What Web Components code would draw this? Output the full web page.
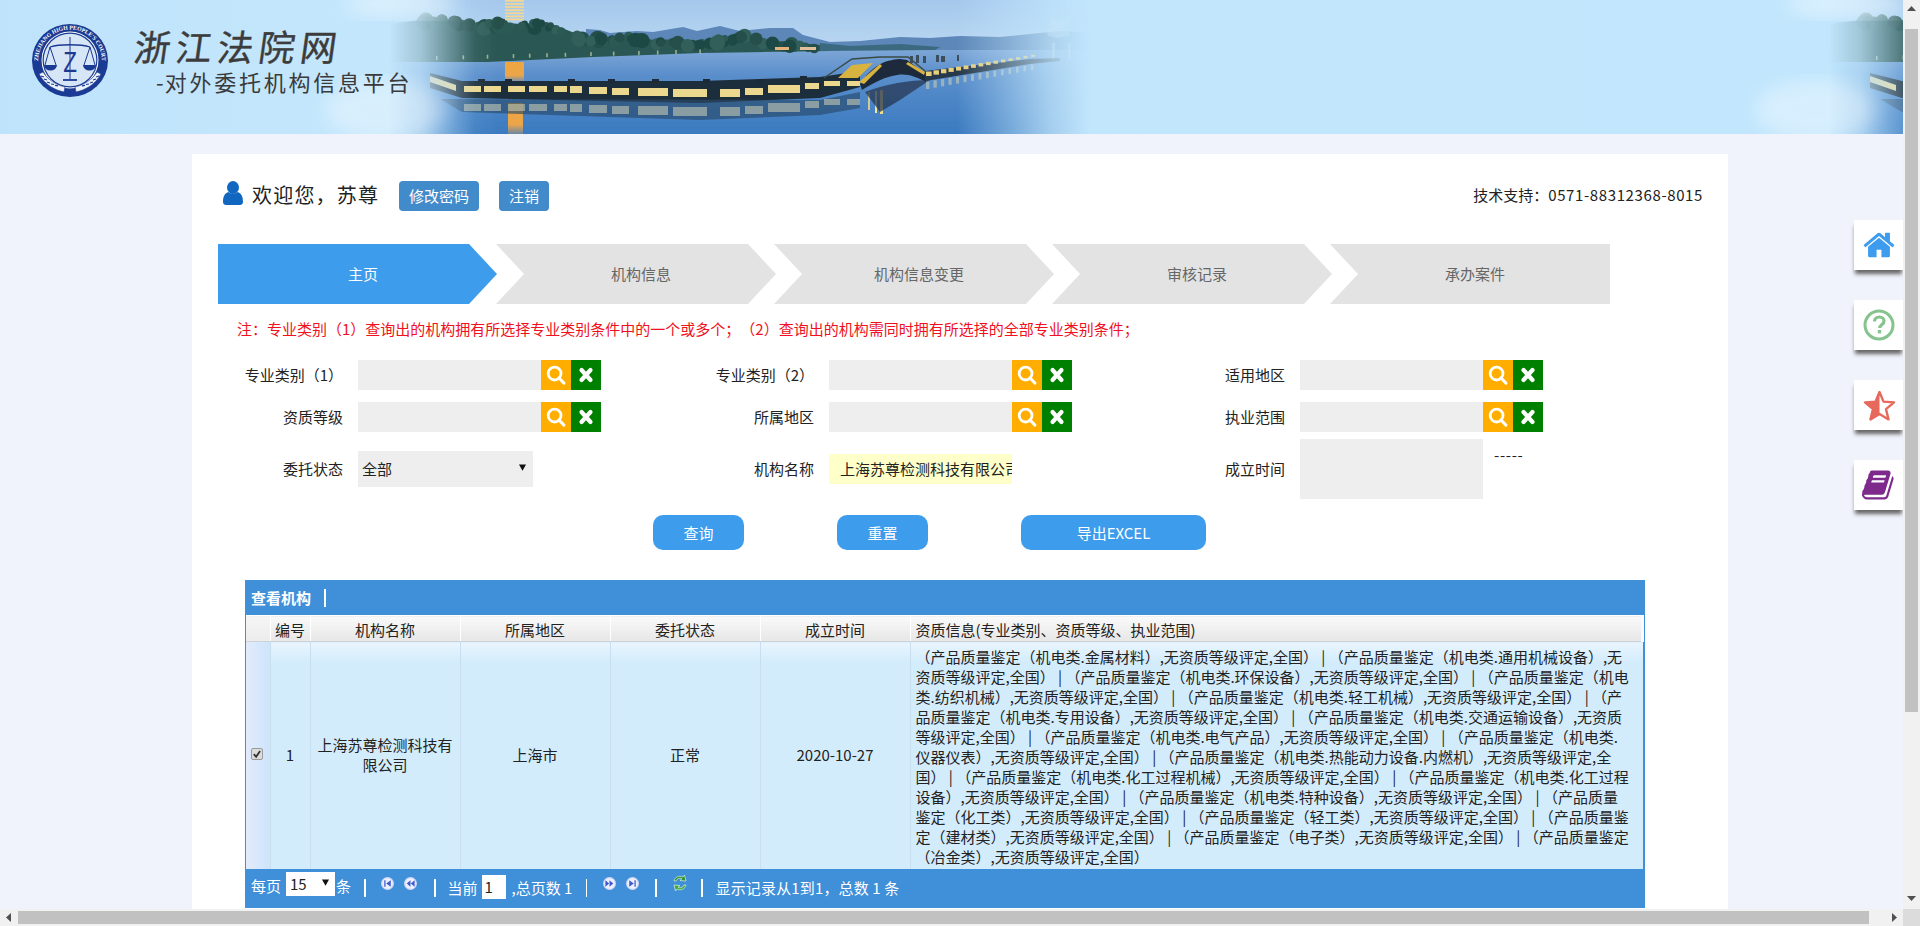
<!DOCTYPE html>
<html lang="zh-CN">
<head>
<meta charset="utf-8">
<title>浙江法院网</title>
<style>
html,body{margin:0;padding:0;height:926px;overflow:hidden;background:#f0f3fb;}
body{font:15px/20px "Noto Sans CJK SC","Liberation Sans",sans-serif;color:#222;text-spacing-trim:space-all;}
</style>
</head>
<body>
<app-shell>
  <court-header></court-header>
  <main-card>
    <welcome-bar></welcome-bar>
    <step-nav>
      <step-item first active>主页</step-item>
      <step-item>机构信息</step-item>
      <step-item>机构信息变更</step-item>
      <step-item>审核记录</step-item>
      <step-item last>承办案件</step-item>
    </step-nav>
    <search-form></search-form>
    <data-grid></data-grid>
  </main-card>
</app-shell>
<side-dock></side-dock>
<fake-scrollbars></fake-scrollbars>

<script>
function def(name, css, html){
  customElements.define(name, class extends HTMLElement{
    constructor(){
      super();
      const r=this.attachShadow({mode:'open'});
      r.innerHTML='<style>'+css+'</style>'+(typeof html==='function'?html():html);
    }
  });
}

/* ---------- header scene ---------- */
function sceneSvg(){
  const lights=[[464,86,481,92],[484,86,501,92],[508,86,525,92],[529,86,547,92],[554,86,567,92],[570,86,582,93],[589,87,607,94],[612,88,629,95],[638,88,668,96],[673,89,707,97],[720,89,740,97],[745,88,763,95],[768,85,800,93],[805,83,819,89],[824,81,840,86],[847,81,860,86]];
  let l='',rf='';
  lights.forEach(a=>{
    l+=`<rect x="${a[0]}" y="${a[1]}" width="${a[2]-a[0]}" height="${a[3]-a[1]}" fill="#ecd78f"/>`;
    rf+=`<rect x="${a[0]}" y="${a[1]+18}" width="${a[2]-a[0]}" height="${a[3]-a[1]+1}" fill="#cfd2b8" opacity=".55"/>`;
  });
  let posts='';
  [478,505,568,608,652,703,757,800,838].forEach((x,i)=>{posts+=`<rect x="${x}" y="${79-(x>760?3:0)}" width="7" height="4" fill="#1b2a38"/>`;});
  let causeway='';
  for(let i=0;i<15;i++){
    const x=926+i*7.5, y=71.5-i*1.2, w=5.6-i*.12, h=4.5-i*.16;
    causeway+=`<rect x="${x}" y="${y}" width="${w}" height="${h}" fill="#e7cf7c"/>`;
    causeway+=`<rect x="${x}" y="${y+10}" width="${w*.6}" height="${h+3}" fill="#e9e2b4" opacity=".45"/>`;
  }
  let floors='';
  for(let i=0;i<7;i++){
    floors+=`<rect x="505" y="${i*3.1}" width="19" height="1.7" fill="#f3d690"/>`;
  }
  let trees='',seed=7;
  const rnd=()=>{seed=(seed*9301+49297)%233280;return seed/233280;};
  const tops=[[420,20],[453,19],[480,25],[497,22],[520,24],[547,22],[567,30],[590,39],[607,37],[633,35],[653,40],[680,39],[700,42],[740,35],[767,40],[820,45]];
  for(let i=0;i<tops.length-1;i++){
    const a=tops[i],b=tops[i+1];
    for(let k=0;k<(b[0]-a[0])/4;k++){
      const t=rnd(),x=a[0]+(b[0]-a[0])*t,y=a[1]+(b[1]-a[1])*t+rnd()*6,r=3+rnd()*5;
      const c=['#1f4a44','#2b5a52','#25504c','#315f5a'][Math.floor(rnd()*4)];
      trees+=`<circle cx="${x.toFixed(1)}" cy="${y.toFixed(1)}" r="${r.toFixed(1)}" fill="${c}"/>`;
    }
  }
  let shore='';
  for(let x=436;x<700;x+=13+rnd()*14){
    const y=56-(x-436)*.025;
    shore+=`<rect x="${x.toFixed(1)}" y="${y.toFixed(1)}" width="1.6" height="4" fill="#b7c7a0" opacity=".8"/>`;
  }
  return `<svg viewBox="0 0 1903 134" width="1903" height="134" xmlns="http://www.w3.org/2000/svg" aria-hidden="true">
  <defs>
    <linearGradient id="fade" x1="0" x2="1440" y1="0" y2="0" gradientUnits="userSpaceOnUse">
      <stop offset=".27" stop-color="#fff" stop-opacity="0"/><stop offset=".292" stop-color="#fff" stop-opacity=".22"/><stop offset=".31" stop-color="#fff" stop-opacity=".55"/><stop offset=".33" stop-color="#fff" stop-opacity=".93"/><stop offset=".345" stop-color="#fff"/>
      <stop offset=".665" stop-color="#fff"/><stop offset=".695" stop-color="#fff" stop-opacity=".65"/><stop offset=".73" stop-color="#fff" stop-opacity=".22"/><stop offset=".757" stop-color="#fff" stop-opacity="0"/>
    </linearGradient>
    <mask id="m" maskUnits="userSpaceOnUse" x="0" y="0" width="1440" height="134"><rect width="1440" height="134" fill="url(#fade)"/></mask>
    <linearGradient id="sky" x1="0" x2="0" y1="0" y2="1"><stop offset="0" stop-color="#a4c8ec"/><stop offset="1" stop-color="#bdd9f2"/></linearGradient>
    <linearGradient id="water" x1="0" x2="0" y1="0" y2="1"><stop offset="0" stop-color="#7ca6d6"/><stop offset=".3" stop-color="#5a8ecb"/><stop offset="1" stop-color="#3a7ac0"/></linearGradient>
    <linearGradient id="glow" x1="0" x2="0" y1="0" y2="1"><stop offset="0" stop-color="#f0a63f"/><stop offset=".7" stop-color="#eba548"/><stop offset="1" stop-color="#d8a060" stop-opacity=".3"/></linearGradient>
    <filter id="soft" x="-2%" y="-10%" width="104%" height="120%"><feGaussianBlur stdDeviation=".7"/></filter>
    <filter id="cloud"><feGaussianBlur stdDeviation="9"/></filter>
    <g id="scene">
      <g mask="url(#m)">
      <g filter="url(#soft)">
        <rect x="370" y="0" width="740" height="56" fill="url(#sky)"/>
        <rect x="370" y="50" width="740" height="84" fill="url(#water)"/>
        <polygon fill="#5b87b8" points="586,29 600,30 610,33 623,32 637,31 653,32 683,27 697,31 720,26 740,31 770,28 793,28 803,35 830,42 860,41 900,37 930,38 960,36 1000,37 1060,31 1100,33 1100,50 586,50"/>
        <polygon fill="#2a5653" points="390,24 420,20 453,19 480,25 497,22 520,24 547,22 567,30 590,39 607,37 633,35 653,40 680,39 700,42 740,35 767,40 820,45 830,47 830,51 700,53 593,57 487,62 390,62"/>
        ${trees}
        <polygon fill="#3a6a80" points="820,43 850,46 900,44 940,47 935,50 820,51"/>
        ${shore}
        <rect x="775" y="47" width="14" height="3" fill="#e6b27a"/><rect x="800" y="47" width="16" height="3" fill="#dfc09a"/>
        <rect x="505" y="62" width="19" height="19" fill="url(#glow)"/>
        <rect x="508" y="103" width="15" height="31" fill="url(#glow)"/>
        ${floors}
        <g opacity=".5" fill="#d7dfe6"><path d="M1050 17l10 5 11-6-4 8 5 4-6 2 5 5-12 3-10-2-3-5 6-3-4-4 3-2z"/><rect x="1052" y="43" width="3" height="16"/><rect x="1068" y="43" width="3" height="16"/></g>
        <polygon fill="#1e2d3a" points="430,73 462,81 700,81 820,77 860,71 860,87 820,98 700,103 462,98 430,88"/>
        ${posts}
        ${l}
        <polygon fill="#e8d79a" points="430,76 456,85 456,91 430,82"/>
        <polygon fill="#2a4a6c" opacity=".65" points="440,99 820,100 860,92 860,108 820,115 700,120 462,112"/>
        ${rf}
        <rect x="880" y="90" width="3" height="24" fill="#f0dc88"/><rect x="868" y="92" width="2" height="18" fill="#f0dc88" opacity=".8"/><rect x="875" y="91" width="2" height="22" fill="#f3e49e"/>
        <path fill="#1e2b3a" d="M860 84 C872 66 884 60 900 59 L907 60 L926 74 L926 82 C915 76 905 72 892 76 C880 79 872 84 862 90Z"/>
        <polygon fill="#d9b33f" points="838,78 852,65 873,63 858,78"/>
        <polygon fill="#d9b33f" points="859,82 880,64 882,66 864,84"/>
        <polygon fill="#d9b33f" points="908,62 925,72 924,75 906,64"/>
        <path fill="none" stroke="#3b4a44" stroke-width="1.5" d="M824 78 L852 59 L880 57 L908 57 L925 71"/>
        <path fill="#253752" opacity=".75" d="M865 92 C885 84 910 80 930 80 L900 100 L880 112Z"/>
        <polygon fill="#26374a" points="925,71 1030,59 1060,58 1060,61 1030,64 925,81"/>
        ${causeway}
        <g fill="#3d4d5c"><rect x="910" y="56" width="3" height="7"/><rect x="916" y="55" width="3" height="8"/><rect x="923" y="56" width="3" height="7"/><rect x="936" y="55" width="3" height="7"/><rect x="941" y="56" width="4" height="6"/><rect x="957" y="55" width="2" height="6"/></g>
      </g>
      </g>
    </g>
  </defs>
  <use href="#scene"/><use href="#scene" x="1440"/>
  <ellipse cx="400" cy="4" rx="55" ry="14" fill="#fff" opacity=".38" filter="url(#cloud)"/>
  <ellipse cx="1845" cy="4" rx="60" ry="14" fill="#fff" opacity=".4" filter="url(#cloud)"/>
  <ellipse cx="385" cy="110" rx="60" ry="30" fill="#fff" opacity=".35" filter="url(#cloud)"/>
  <ellipse cx="1815" cy="110" rx="60" ry="30" fill="#fff" opacity=".35" filter="url(#cloud)"/>
  </svg>`;
}

function emblem(){
  return `<svg viewBox="0 0 78 75" width="78" height="75" xmlns="http://www.w3.org/2000/svg" role="img" aria-label="court emblem">
    <defs><path id="arc" d="M10 52A32 32 0 1 1 68 52"/></defs>
    <ellipse cx="39" cy="37.500" rx="38" ry="36.500" fill="#1b3a93"/>
    <circle cx="39" cy="37" r="28.500" fill="#fff"/>
    <circle cx="39" cy="37" r="27.500" fill="#1b3a93"/>
    <circle cx="39" cy="37" r="26.300" fill="#d6e6f6"/>
    <text font-family="Liberation Serif,serif" font-size="5.800" font-weight="700" fill="#fff" text-anchor="middle"><textPath href="#arc" startOffset="50%">ZHEJIANG HIGH PEOPLE'S COURT</textPath></text>
    <g fill="none" stroke="#1b3a93" stroke-width="1">
      <path d="M19 24 C28 21 50 21 59 24" stroke-width="1.300"/><path d="M39 14 V56"/><path d="M32 57 H46" stroke-width="1.800"/>
      <path d="M19 24 L14 42 M19 24 L25 42 M59 24 L53 42 M59 24 L64 42"/>
    </g>
    <path d="M13 42 h13 a6.500 5.500 0 0 1 -13 0z M52 42 h13 a6.500 5.500 0 0 1 -13 0z" fill="#1b3a93"/>
    <text transform="translate(39 49) scale(.75 1)" text-anchor="middle" font-family="Liberation Sans,sans-serif" font-size="30" fill="#1b3a93">Z</text>
    <g fill="#eef3fb" stroke="#1b3a93" stroke-width=".6">
      <path d="M8 51 C14 62 24 67 33 69 L34 64 C25 62 17 57 12 49Z"/>
      <path d="M70 51 C64 62 54 67 45 69 L44 64 C53 62 61 57 66 49Z"/>
    </g>
    <path d="M10 53l3 1m0 2l3 1m0 2l3 1m1 1l3 .5m1 .8l3 .5M68 53l-3 1m0 2l-3 1m0 2l-3 1m-1 1l-3 .5m-1 .8l-3 .5" stroke="#1b3a93" stroke-width="1.200" fill="none"/>
  </svg>`;
}

def('court-header',`
  :host{display:grid;height:134px;width:1903px;overflow:hidden;background:linear-gradient(90deg,#bee3fb 0,#c3e6fc 300px,#c1e6fd 100%);}
  .bg,.fg{grid-area:1/1;}
  .bg{line-height:0;}
  .fg{display:flex;align-items:flex-start;padding:23px 0 0 31px;position:relative;}
  .titles{margin-left:26px;padding-top:1px;}
  .t1{font-size:36px;line-height:43px;letter-spacing:5.5px;color:#3c3c3c;font-weight:400;transform:skewX(-8deg);white-space:nowrap;-webkit-text-stroke:.4px #3c3c3c;}
  .t2{font-size:22px;line-height:28px;letter-spacing:2.75px;color:#3a3a3a;margin:0 0 0 21px;white-space:nowrap;}
  .t2 b{font-weight:400;letter-spacing:1px;}
`,()=>`<div class="bg">${sceneSvg()}</div>
  <div class="fg">${emblem()}<div class="titles"><div class="t1">浙江法院网</div><div class="t2"><b>-</b>对外委托机构信息平台</div></div></div>`);

def('app-shell',`:host{display:block;width:1903px;height:909px;overflow:hidden;background:#f0f3fb;}`,`<slot></slot>`);
def('main-card',`:host{display:block;width:1510px;margin:20px 0 0 192px;padding:26px 0 0 26px;background:#fff;height:755px;box-sizing:content-box;}`,`<slot></slot>`);

/* ---------- welcome ---------- */
def('small-btn',`:host{display:inline-flex;align-items:center;justify-content:center;height:30px;padding:0 10px;background:#428bca;color:#fff;border-radius:4px;font-size:15px;box-sizing:border-box;}`,`<slot></slot>`);
def('welcome-bar',`
  :host{display:flex;align-items:center;height:32px;margin-bottom:32px;padding-left:5px;width:1485px;box-sizing:border-box;}
  svg{display:block;margin-top:-6px;}
  .hi{font-size:20px;letter-spacing:1.2px;margin-left:9px;width:127px;white-space:nowrap;color:#222;margin-top:-2px;}
  small-btn{margin-left:20px;}
  .tel{margin-left:auto;font-size:15px;color:#222;white-space:nowrap;margin-top:-3px;}
  .tel b{font-weight:400;letter-spacing:.62px;}
`,`<svg width="20" height="24" viewBox="0 0 20 24"><ellipse cx="10" cy="6.500" rx="6" ry="6.500" fill="#1166c0"/><path d="M0 21c0-6 2-9 5.500-10 2.500 2.200 6.500 2.200 9 0C18 12 20 15 20 21c0 2-1.500 3-3 3H3c-1.500 0-3-1-3-3z" fill="#1166c0"/></svg>
  <span class="hi">欢迎您，苏尊</span><small-btn>修改密码</small-btn><small-btn>注销</small-btn>
  <span class="tel">技术支持：<b>0571-88312368-8015</b></span>`);

/* ---------- steps ---------- */
def('step-nav',`:host{display:flex;height:60px;}`,`<slot></slot>`);
def('step-item',`
  :host{display:flex;align-items:center;justify-content:center;box-sizing:border-box;width:280px;height:60px;padding-left:10px;margin-left:-2px;background:#e3e3e3;color:#666;font-size:15px;
    clip-path:polygon(0 0,252px 0,280px 30px,252px 60px,0 60px,28px 30px);flex:none;}
  :host([first]){margin-left:0;clip-path:polygon(0 0,251px 0,279px 30px,251px 60px,0 60px);}
  :host([last]){clip-path:polygon(0 0,100% 0,100% 100%,0 100%,28px 30px);}
  :host([active]){background:#3d9ceb;color:#fff;}
`,`<slot></slot>`);

/* ---------- form ---------- */
const ICON_SEARCH=`<svg width="20" height="20" viewBox="0 0 20 20"><circle cx="8.600" cy="8.600" r="6.400" fill="none" stroke="#fff" stroke-width="2.800"/><path d="M13 13l4.800 5" stroke="#fff" stroke-width="3.200" stroke-linecap="round"/></svg>`;
const ICON_X=`<svg width="16" height="18" viewBox="0 0 16 18"><path d="M3.500 4l9 10M12.500 4l-9 10" stroke="#fff" stroke-width="4.200" stroke-linecap="round"/></svg>`;
def('pick-input',`
  :host{display:flex;height:30px;}
  .box{width:183px;background:#eee;}
  .b{width:30px;display:flex;align-items:center;justify-content:center;}
  .s{background:#ffae00;}
  .x{background:#008000;}
`,`<div class="box"></div><div class="b s">${ICON_SEARCH}</div><div class="b x">${ICON_X}</div>`);
def('status-select',`
  :host{display:flex;align-items:center;justify-content:space-between;width:175px;height:36px;background:#eee;padding:0 7px 0 4px;box-sizing:border-box;font-size:15px;color:#222;}
  svg{display:block;margin-top:-3px;}
`,`<span>全部</span><svg width="7" height="7" viewBox="0 0 7 7"><path d="M0 .5h7L3.500 6.800z" fill="#111"/></svg>`);
def('name-input',`
  :host{display:block;width:183px;height:30px;background:#ffffc9;padding-left:11px;box-sizing:border-box;overflow:hidden;}
  div{width:180px;line-height:30px;white-space:nowrap;color:#222;}
`,`<div><slot></slot></div>`);
def('date-range',`
  :host{display:flex;align-items:flex-start;height:60px;}
  .box{width:183px;height:60px;background:#eee;}
  span{margin:6px 0 0 11px;line-height:20px;letter-spacing:.7px;}
`,`<div class="box"></div><span>-----</span>`);
def('action-btn',`
  :host{display:flex;align-items:center;justify-content:center;height:35px;width:91px;background:#3d9ceb;color:#fff;border-radius:10px;font-size:15px;flex:none;}
`,`<slot></slot>`);

def('search-form',`
  :host{display:block;}
  .note{color:#f01020;margin:15px 0 21px 19px;height:20px;white-space:pre;font-size:15px;line-height:19px;}
  .row{display:flex;}
  .r2{margin-top:12px;}
  .r3{margin-top:7px;height:60px;}
  .btns{display:flex;gap:93px;padding-left:435px;margin:16px 0 30px;}
  .w{width:185px;}
  .f{display:flex;align-items:center;width:471px;}
  .l{width:125px;text-align:right;margin-right:15px;white-space:nowrap;flex:none;color:#222;}
`,()=>{
  const f=(l,c)=>`<div class="f"><div class="l">${l}</div>${c}</div>`;
  return `<div class="note">注：专业类别（1）查询出的机构拥有所选择专业类别条件中的一个或多个；（2）查询出的机构需同时拥有所选择的全部专业类别条件；</div>
  <div class="row">${f('专业类别（1）','<pick-input></pick-input>')}${f('专业类别（2）','<pick-input></pick-input>')}${f('适用地区','<pick-input></pick-input>')}</div>
  <div class="row r2">${f('资质等级','<pick-input></pick-input>')}${f('所属地区','<pick-input></pick-input>')}${f('执业范围','<pick-input></pick-input>')}</div>
  <div class="row r3">${f('委托状态','<status-select></status-select>')}${f('机构名称','<name-input>上海苏尊检测科技有限公司</name-input>')}${f('成立时间','<date-range></date-range>')}</div>
  <div class="btns"><action-btn>查询</action-btn><action-btn>重置</action-btn><action-btn class="w">导出EXCEL</action-btn></div>`;
});

/* ---------- grid ---------- */
const navIcon=(d)=>`<svg class="nav" width="13" height="13" viewBox="0 0 12 12"><circle cx="6" cy="6" r="6" fill="#cfd8f8"/><circle cx="6" cy="6" r="4.800" fill="#eef0fc"/><path d="${d}" fill="#3f5ccf"/></svg>`;
const Q=[
'（产品质量鉴定（机电类.金属材料）,无资质等级评定,全国） | （产品质量鉴定（机电类.通用机械设备）,无',
'资质等级评定,全国） | （产品质量鉴定（机电类.环保设备）,无资质等级评定,全国） | （产品质量鉴定（机电',
'类.纺织机械）,无资质等级评定,全国） | （产品质量鉴定（机电类.轻工机械）,无资质等级评定,全国） | （产',
'品质量鉴定（机电类.专用设备）,无资质等级评定,全国） | （产品质量鉴定（机电类.交通运输设备）,无资质',
'等级评定,全国） | （产品质量鉴定（机电类.电气产品）,无资质等级评定,全国） | （产品质量鉴定（机电类.',
'仪器仪表）,无资质等级评定,全国） | （产品质量鉴定（机电类.热能动力设备.内燃机）,无资质等级评定,全',
'国） | （产品质量鉴定（机电类.化工过程机械）,无资质等级评定,全国） | （产品质量鉴定（机电类.化工过程',
'设备）,无资质等级评定,全国） | （产品质量鉴定（机电类.特种设备）,无资质等级评定,全国） | （产品质量',
'鉴定（化工类）,无资质等级评定,全国） | （产品质量鉴定（轻工类）,无资质等级评定,全国） | （产品质量鉴',
'定（建材类）,无资质等级评定,全国） | （产品质量鉴定（电子类）,无资质等级评定,全国） | （产品质量鉴定',
'（冶金类）,无资质等级评定,全国）'];
def('data-grid',`
  :host{display:block;width:1398px;margin-left:27px;padding:0 1px;background:#3f8fd9;}
  .title{height:35px;display:flex;align-items:center;color:#fff;font-weight:700;font-size:15px;padding-left:5px;}
  .title i{display:block;width:1.5px;height:18px;background:#fff;margin-left:13px;}
  table{border-collapse:collapse;table-layout:fixed;width:1398px;border-top:1px solid #fff;}
  th{height:26px;padding:3px 0 0;font-weight:400;font-size:15px;line-height:20px;color:#222;background:linear-gradient(#fafafa,#e6e6e6);border-right:1px solid #fff;border-bottom:1px solid #cfd3d6;box-sizing:border-box;}
  th.c0{background:linear-gradient(#f5f5f5,#ececec);}
  th.q{text-align:left;padding-left:5px;border-right:3px solid #f7fbff;}
  td{height:227px;padding:0 6px;text-align:center;vertical-align:middle;background:linear-gradient(#e9f5fe 0,#d3ecfc 20px);border-right:1px solid #c9dff0;box-sizing:border-box;font-size:15px;line-height:20px;color:#222;}
  td.c0{padding:0;background:linear-gradient(90deg,#e2ebfc,#cde4fa);}
  td.c0 svg{display:block;margin:-3px 0 0 5px;}
  td.q{text-align:left;vertical-align:top;padding:5px 0 0 5px;white-space:nowrap;border-right:0;}
  .foot{height:39px;display:flex;align-items:center;color:#fff;font-size:15px;padding-left:5px;box-sizing:border-box;white-space:nowrap;}
  .foot i{display:block;width:1.5px;height:18px;background:#fff;flex:none;}
  .sel{display:flex;align-items:center;justify-content:space-between;width:49px;height:24px;background:#fff;color:#222;margin:0 0 8px 5px;padding:0 6px 0 4px;box-sizing:border-box;}
  .sel svg{margin-top:-4px;}
  .inp{width:24px;height:24px;line-height:24px;background:#fff;color:#222;margin:0 0 3px 4px;padding-left:3px;box-sizing:border-box;}
  .nav{flex:none;margin-bottom:10px;display:block;}
`,()=>`<div class="title">查看机构<i></i></div>
  <table><colgroup><col style="width:24px"><col style="width:40px"><col style="width:150px"><col style="width:150px"><col style="width:150px"><col style="width:150px"><col></colgroup>
  <thead><tr><th class="c0"></th><th>编号</th><th>机构名称</th><th>所属地区</th><th>委托状态</th><th>成立时间</th><th class="q">资质信息(专业类别、资质等级、执业范围)</th></tr></thead>
  <tbody><tr>
    <td class="c0"><svg width="12" height="12" viewBox="0 0 12 12"><rect x=".5" y=".5" width="11" height="11" rx="1.500" fill="#dcdcdc" stroke="#9a9a9a"/><path d="M2.800 6.200l2.300 2.600 4-5.800" fill="none" stroke="#333" stroke-width="1.800"/></svg></td>
    <td style="padding:0">1</td><td>上海苏尊检测科技有限公司</td><td>上海市</td><td>正常</td><td>2020-10-27</td>
    <td class="q">${Q.join('<br>')}</td>
  </tr></tbody></table>
  <div class="foot">
    <span style="margin-bottom:4px">每页</span>
    <div class="sel"><span>15</span><svg width="7" height="7" viewBox="0 0 7 7"><path d="M0 .5h7L3.500 6.800z" fill="#111"/></svg></div>
    <span style="margin:0 0 4px 1px">条</span>
    <i style="margin-left:13px"></i>
    <span style="margin-left:15.500px;display:flex">${navIcon('M3 3h1.200v6H3zM9 3v6L4.800 6z')}</span>
    <span style="margin-left:9.500px;display:flex">${navIcon('M6 3v6L2.500 6zM9.800 3v6L6.300 6z')}</span>
    <i style="margin-left:17.500px"></i>
    <span style="margin-left:12px">当前</span>
    <div class="inp">1</div>
    <span style="margin-left:6px;width:61px">,总页数 1</span>
    <i style="margin-left:13px"></i>
    <span style="margin-left:16px;display:flex">${navIcon('M2.200 3v6L5.700 6zM6 3v6L9.500 6z')}</span>
    <span style="margin-left:9.500px;display:flex">${navIcon('M3 3v6L7.200 6zM7.800 3H9v6H7.800z')}</span>
    <i style="margin-left:16.500px"></i>
    <span style="margin-left:15px;display:flex"><svg class="nav" width="16" height="18" viewBox="0 0 16 18"><path d="M2 7C3 3 7 1 11 3l1.500-2L14 7 8 6.500l2-1.800C7.500 3.500 5 4.500 4 7z" fill="#2e8f3c" stroke="#dff3c8" stroke-width=".7"/><path d="M14 11c-1 4-5 6-9 4l-1.500 2L2 11l6 .5-2 1.800c2.500 1.200 5 .2 6-2.300z" fill="#3fa64a" stroke="#dff3c8" stroke-width=".7"/></svg></span>
    <i style="margin-left:13.500px"></i>
    <span style="margin-left:13px;letter-spacing:.15px">显示记录从1到1，总数 1 条</span>
  </div>`);

/* ---------- side dock ---------- */
const P={
 home:'M1472 992v480q0 26-19 45t-45 19h-384v-384h-256v384h-384q-26 0-45-19t-19-45v-480q0-1 .5-3t.5-3l575-474 575 474q1 2 1 6zm223-69l-62 74q-8 9-21 11h-3q-13 0-21-7l-692-577-692 577q-12 8-24 7-13-2-21-11l-62-74q-8-10-7-23.5t11-21.5l719-599q32-26 76-26t76 26l244 204v-195q0-14 9-23t23-9h192q14 0 23 9t9 23v408l219 182q10 8 11 21.5t-7 23.5z',
 book:'M1639 478q40 57 18 129l-275 906q-19 64-76.500 107.500t-122.500 43.500h-923q-77 0-148.500-53.500t-99.500-131.500q-24-67-2-127 0-4 3-27t4-37q1-8-3-21.500t-3-19.500q2-11 8-21t16.500-23.500 16.500-23.500q23-38 45-91.500t30-91.500q3-10 .5-30t-.5-28q3-11 17-28t17-23q21-36 42-92t25-90q1-9-2.500-32t.5-28q4-13 22-30.500t22-22.500q19-26 42.500-84.500t27.500-96.500q1-8-3-25.500t-2-26.500q2-8 9-18t18-23 17-21q8-12 16.500-30.500t15-35 16-36 19.500-32 26.500-23.500 36-11.500 47.500 5.500l-1 3q38-9 51-9h761q74 0 114 56t18 130l-274 906q-36 119-71.500 153.500t-128.500 34.500h-869q-27 0-38 15-11 16-1 43 24 70 144 70h923q29 0 56-15.500t35-41.500l300-987q7-22 5-57 38 15 59 43zm-1064 2q-4 13 2 22.500t20 9.500h608q13 0 25.500-9.500t16.500-22.500l21-64q4-13-2-22.500t-20-9.500h-608q-13 0-25.500 9.500t-16.500 22.500zm-83 256q-4 13 2 22.500t20 9.500h608q13 0 25.500-9.500t16.500-22.500l21-64q4-13-2-22.500t-20-9.500h-608q-13 0-25.500 9.500t-16.500 22.500z'
};
def('side-dock',`
  :host{position:fixed;left:1854px;top:220px;width:49px;display:flex;flex-direction:column;gap:30px;}
  .c{height:50px;background:#fff;display:flex;align-items:center;justify-content:center;box-shadow:0 5px 4px -1px #666;padding-left:1px;box-sizing:border-box;}
`,`<div class="c"><svg width="34" height="34" viewBox="0 0 1792 1792"><path fill="#3d9cee" d="${P.home}"/></svg></div>
  <div class="c"><svg width="32" height="32" viewBox="0 0 32 32"><circle cx="16" cy="16" r="14" fill="none" stroke="#86c38e" stroke-width="3"/><path d="M11.500 12.500c0-3 2.200-4.500 4.800-4.500 2.800 0 4.700 1.700 4.700 4 0 3.800-4.300 3.600-4.300 7" fill="none" stroke="#86c38e" stroke-width="3.200"/><rect x="14.800" y="21" width="3.400" height="3.400" fill="#86c38e"/></svg></div>
  <div class="c"><svg width="33" height="31" viewBox="0 0 33 31"><path d="M16.500 2l4 9.600 10.500.800-8 6.700 2.500 10.300-9-5.500-9 5.500 2.500-10.300-8-6.700 10.500-.800z" fill="none" stroke="#e7695c" stroke-width="2.400" stroke-linejoin="round"/><path d="M16.500 2l-4 9.600-10.500.800 8 6.700-2.500 10.300 9-5.500z" fill="#e7695c"/></svg></div>
  <div class="c"><svg width="34" height="34" viewBox="0 0 1792 1792"><path fill="#7d2a8c" d="${P.book}"/></svg></div>`);

/* ---------- scrollbars ---------- */
def('fake-scrollbars',`
  :host{display:block;position:fixed;left:0;top:0;width:1920px;height:926px;pointer-events:none;}
  .v{position:absolute;left:1903px;top:0;width:17px;height:909px;background:#f1f1f1;}
  .vt{position:absolute;left:2px;top:29px;width:13px;height:683px;background:#c1c1c1;}
  .h{position:absolute;left:0;top:909px;width:1903px;height:17px;background:#f1f1f1;}
  .ht{position:absolute;left:18px;top:2px;width:1851px;height:13px;background:#c1c1c1;}
  .corner{position:absolute;left:1903px;top:909px;width:17px;height:17px;background:#dcdcdc;}
  svg{position:absolute;}
`,`<div class="v"><svg style="left:4px;top:6px" width="9" height="6"><path d="M4.500 0L9 5H0z" fill="#505050"/></svg><div class="vt"></div><svg style="left:4px;top:896px" width="9" height="6"><path d="M0 0h9L4.500 5z" fill="#505050"/></svg></div>
  <div class="h"><svg style="left:6px;top:4px" width="6" height="9"><path d="M5 0v9L0 4.500z" fill="#505050"/></svg><div class="ht"></div><svg style="left:1892px;top:4px" width="6" height="9"><path d="M0 0l5 4.500L0 9z" fill="#505050"/></svg></div>
  <div class="corner"></div>`);
</script>
</body>
</html>
